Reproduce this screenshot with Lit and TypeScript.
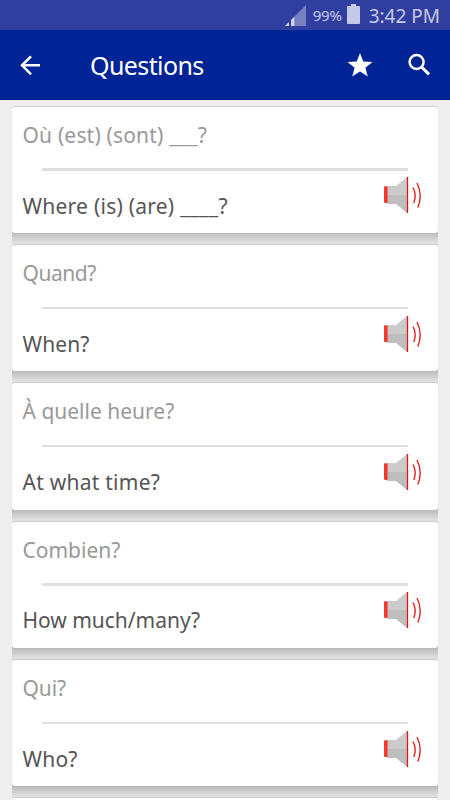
import { LitElement, html, css } from "lit";
import { customElement, property } from "lit/decorators.js";

interface Phrase {
  french: string;
  english: string;
  frenchSpacing: number;
  englishSpacing: number;
  shade: number;
}

const PHRASES: Phrase[] = [
  { french: "Où (est) (sont) ___?", english: "Where (is) (are) ____?", frenchSpacing: 0.18, englishSpacing: 0.25, shade: 0.2 },
  { french: "Quand?", english: "When?", frenchSpacing: -0.45, englishSpacing: 0.1, shade: 0.21 },
  { french: "À quelle heure?", english: "At what time?", frenchSpacing: 0, englishSpacing: 0.25, shade: 0.21 },
  { french: "Combien?", english: "How much/many?", frenchSpacing: 0, englishSpacing: -0.02, shade: 0.22 },
  { french: "Qui?", english: "Who?", frenchSpacing: -0.1, englishSpacing: 0.2, shade: 0.22 },
];

@customElement("phrase-card")
export class PhraseCard extends LitElement {
  @property({ attribute: false }) phrase!: Phrase;

  static styles = css`
    :host {
      display: block;
      flex: none;
      height: 138.3px;
    }
    .card {
      box-sizing: border-box;
      position: relative;
      height: 126.3px;
      border-radius: 3px;
      background: #fff;
      box-shadow: 0 -0.5px 1px rgba(0, 0, 0, 0.13);
      display: grid;
      grid-template-columns: 1fr 64px;
      grid-template-rows: 61.6px 2.4px 1fr;
    }
    .french,
    .english {
      font-size: 21px;
      line-height: 30px;
      padding-left: 10.5px;
      white-space: nowrap;
    }
    .french {
      color: #999;
      padding-top: 13px;
      grid-column: 1 / 3;
    }
    .rule {
      grid-column: 1 / 3;
      margin: 0 30px;
      background: #dfdfdf;
    }
    .english {
      color: #555;
      padding-top: 19.8px;
    }
    .speaker {
      width: 40px;
      height: 40px;
      margin: 4.6px 0 0 9px;
      display: block;
    }
    .shade {
      height: 15px;
      margin-top: -3px;
    }
  `;

  render() {
    const p = this.phrase;
    const s = p.shade;
    const bg = `linear-gradient(rgba(0,0,0,${s}) 3px, rgba(0,0,0,${s * 0.65}) 8px, rgba(0,0,0,0.02))`;
    return html`
      <div class="card">
        <div class="french" style="letter-spacing:${p.frenchSpacing}px">${p.french}</div>
        <div class="rule"></div>
        <div class="english" style="letter-spacing:${p.englishSpacing}px">${p.english}</div>
        <svg class="speaker" viewBox="0 0 40 40">
          <path d="M4 11h9L24 2v18H4z" fill="#cbcbcb" />
          <path d="M4 20h20v18L13 29H4z" fill="#bebebe" />
          <rect x="1" y="11.2" width="3.6" height="16.8" rx="1" fill="#f13a2b" />
          <path d="M24.5 2v36" stroke="#e01616" stroke-width="1.3" />
          <path d="M30 12.5q4 7.5 0.8 15.5" fill="none" stroke="#e22020" stroke-width="1.4" />
          <path d="M34 8q6 12 0.8 24.5" fill="none" stroke="#e22020" stroke-width="1.4" />
        </svg>
      </div>
      <div class="shade" style="background:${bg}"></div>
    `;
  }
}

@customElement("app-root")
export class AppRoot extends LitElement {
  static styles = css`
    :host {
      display: flex;
      flex-direction: column;
      width: 450px;
      height: 800px;
      overflow: hidden;
      background: #eee;
      font-family: "Noto Sans", sans-serif;
    }
    .status {
      flex: none;
      height: 30px;
      background: #303f9f;
      color: #c5c9e9;
      display: flex;
      align-items: center;
      justify-content: flex-end;
      box-sizing: border-box;
      padding-right: 10px;
    }
    .signal {
      width: 21px;
      height: 21px;
      margin-right: 7px;
    }
    .percent {
      font-size: 15px;
      width: 31px;
      letter-spacing: -0.2px;
      white-space: nowrap;
    }
    .battery {
      width: 13px;
      height: 20px;
      margin: 0 9px 2px 3px;
    }
    .time {
      font-size: 19px;
      line-height: 30px;
      padding-top: 1px;
      white-space: nowrap;
    }
    .bar {
      flex: none;
      height: 70px;
      box-sizing: border-box;
      background: #002395;
      border-bottom: 1px solid #001a77;
      color: #fff;
      display: flex;
      align-items: center;
      padding: 0 19px 0 20px;
    }
    .back {
      width: 21px;
      height: 20px;
    }
    .title {
      font-size: 25px;
      letter-spacing: -0.6px;
      margin-left: 49px;
      line-height: 34px;
      flex: 1;
    }
    .star {
      width: 26px;
      height: 24px;
      margin-right: 34px;
    }
    .search {
      width: 24px;
      height: 24px;
    }
    .list {
      flex: 1;
      min-height: 0;
      overflow: hidden;
      padding: 6.8px 12.5px 0 12px;
      display: flex;
      flex-direction: column;
    }
    .next {
      flex: none;
      height: 126px;
      border-radius: 3px;
      background: #fff;
      box-shadow: 0 -0.5px 1px rgba(0, 0, 0, 0.13);
    }
  `;

  render() {
    return html`
      <div class="status">
        <svg class="signal" viewBox="0 0 21 21">
          <path d="M6.3 14.7 21 0v21H6.3z" fill="#7881c0" />
          <path d="M0 21 4 17v4zM6 15 9.3 11.7V21H6z" fill="#d0d3ee" />
        </svg>
        <span class="percent">99%</span>
        <svg class="battery" viewBox="0 0 13 20">
          <path d="M4 0h5v2h3.2q.8 0 .8.8v16.4q0 .8-.8.8H.8q-.8 0-.8-.8V2.8Q0 2 .8 2H4z" fill="#c5c9e9" />
        </svg>
        <span class="time">3:42 PM</span>
      </div>
      <div class="bar">
        <svg class="back" viewBox="0 0 21 20" fill="none" stroke="#fff" stroke-width="2.5">
          <path d="M20 10.3H2M11 1.3 2 10.3l9 9" />
        </svg>
        <span class="title">Questions</span>
        <svg class="star" viewBox="0 0 26 24">
          <path d="m13 0 3.3 8.4 9.2.5-7.1 5.8 2.4 8.8L13 18.6l-7.8 4.9 2.4-8.8L.5 8.9l9.2-.5z" fill="#fff" />
        </svg>
        <svg class="search" viewBox="0 0 24 24" fill="none" stroke="#fff">
          <circle cx="9.6" cy="9" r="7" stroke-width="2.5" />
          <path d="m14.6 14 7.4 7.4" stroke-width="3" />
        </svg>
      </div>
      <div class="list">
        ${PHRASES.map((p) => html`<phrase-card .phrase=${p}></phrase-card>`)}
        <div class="next"></div>
      </div>
    `;
  }
}
